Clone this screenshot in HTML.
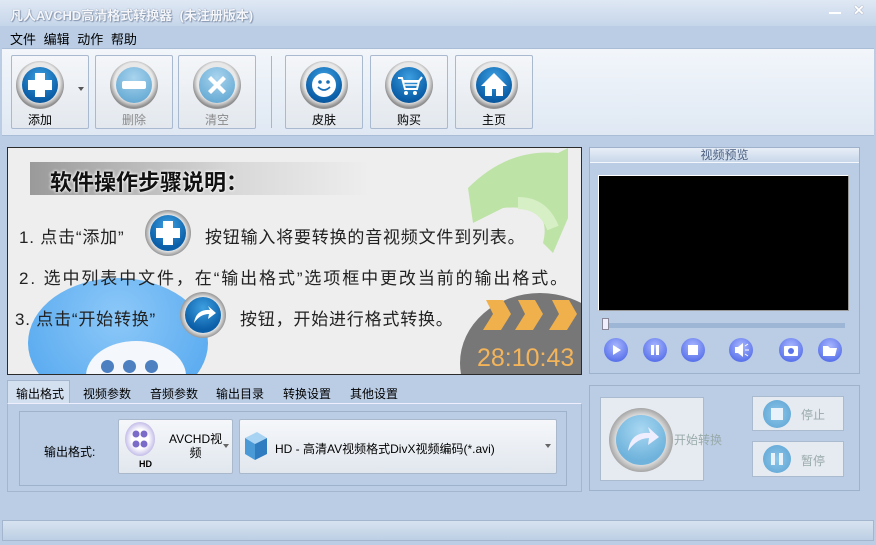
<!DOCTYPE html>
<html><head><meta charset="utf-8"><style>
*{margin:0;padding:0;box-sizing:border-box}
body{width:876px;height:545px;background:#bacde5;font-family:"Liberation Sans","Noto Sans CJK SC",sans-serif;font-size:12px;position:relative;overflow:hidden;color:#000}
.a{position:absolute}
.btn{position:absolute;top:55px;width:78px;height:74px;border:1px solid #a9b9cf;border-radius:2px;background:linear-gradient(#f4f6f9,#e3e8ee);text-align:center}
.btn .ic{position:absolute;left:50%;margin-left:-24px;top:5px;width:48px;height:48px;border-radius:50%;background:radial-gradient(circle at 50% 45%,#e8e8e8 55%,#8d8d8d 70%,#ddd 100%)}
.btn .ic i{position:absolute;left:6px;top:6px;width:36px;height:36px;border-radius:50%;background:radial-gradient(circle at 50% 30%,#3d9fe0,#0b5fa8 70%,#064a87);display:block}
.btn .ic svg{position:absolute;left:6px;top:6px}
.btn span{position:absolute;left:0;right:0;top:55px;font-size:12px}
.dis .ic i{background:radial-gradient(circle at 50% 30%,#a9d4ee,#6fb0d8 70%,#5a9cc8)}
.dis span{color:#8a8a8a}
.pb{position:absolute;width:24px;height:24px;border-radius:50%;background:radial-gradient(circle at 50% 35%,#a9b8ff,#5b73ea 75%,#7a8ef0);top:338px}
.tab{position:absolute;top:385px;font-size:12px}
.t{position:absolute;font-size:17px;letter-spacing:0.8px;color:#222;white-space:nowrap}
</style></head><body>
<div class="a" style="left:0;top:0;width:876px;height:26px;background:linear-gradient(#dfe8f4,#c6d6ea)"></div>
<div class="a" style="left:10px;top:5px;font-size:13px;font-weight:bold;color:#f4f6fa;text-shadow:0 0 1px #6d7f98,1px 1px 1px #8a9ab2">凡人AVCHD高清格式转换器 &nbsp;(未注册版本)</div>
<div class="a" style="left:829px;top:4px;width:12px;height:10px;border-bottom:2px solid #fff"></div>
<div class="a" style="left:853px;top:2px;color:#fff;font-size:14px;font-weight:bold;text-shadow:0 0 1px #667">✕</div>
<div class="a" style="left:10px;top:29px;font-size:13px;word-spacing:4px">文件 编辑 动作 帮助</div>
<div class="a" style="left:2px;top:48px;width:872px;height:88px;background:linear-gradient(#f2f6fb,#dfe8f3);border-top:1px solid #a9bdd6;border-bottom:1px solid #a9bdd6"></div>
<div class="btn" style="left:11px"><div class="ic" style="margin-left:-34px"><i></i><svg width="36" height="36"><path d="M13 6h10v7h7v10h-7v7H13v-7H6V13h7z" fill="#fff"/></svg></div><div class="a" style="left:66px;top:31px;border:3px solid transparent;border-top:4px solid #555"></div><span style="left:-20px">添加</span></div>
<div class="btn dis" style="left:95px"><div class="ic"><i></i><svg width="36" height="36"><rect x="6" y="14" width="24" height="8" rx="2" fill="#fff"/></svg></div><span>删除</span></div>
<div class="btn dis" style="left:178px"><div class="ic"><i></i><svg width="36" height="36"><path d="M9 12l3-3 6 6 6-6 3 3-6 6 6 6-3 3-6-6-6 6-3-3 6-6z" fill="#fff"/></svg></div><span>清空</span></div>
<div class="a" style="left:271px;top:56px;width:1px;height:72px;background:#a8b6c8"></div>
<div class="btn" style="left:285px"><div class="ic"><i></i><svg width="36" height="36"><circle cx="18" cy="18" r="12" fill="#fff"/><circle cx="14" cy="15" r="1.8" fill="#1a70b8"/><circle cx="22" cy="15" r="1.8" fill="#1a70b8"/><path d="M12 20q6 6 12 0" stroke="#1a70b8" stroke-width="1.6" fill="none"/></svg></div><span>皮肤</span></div>
<div class="btn" style="left:370px"><div class="ic"><i></i><svg width="36" height="36"><path d="M7 11h4l3 11h12l2-8H12" stroke="#fff" stroke-width="2" fill="none"/><path d="M13 15h14M14 18h12" stroke="#fff" stroke-width="1.5"/><circle cx="15" cy="26" r="2" fill="#fff"/><circle cx="24" cy="26" r="2" fill="#fff"/><path d="M28 14l3-4" stroke="#fff" stroke-width="2"/></svg></div><span>购买</span></div>
<div class="btn" style="left:455px"><div class="ic"><i></i><svg width="36" height="36"><path d="M18 6L5 19h4v10h7v-7h4v7h7V19h4z" fill="#fff"/></svg></div><span>主页</span></div>
<div class="a" style="left:7px;top:147px;width:575px;height:228px;border:1px solid #2b2b2b;background:#eeeeee;overflow:hidden">
 <div class="a" style="left:22px;top:14px;width:340px;height:33px;background:linear-gradient(90deg,#9a9a9a,#d8d8d8 60%,#eee)"></div>
 <div class="a" style="left:42px;top:17px;font-size:22px;font-weight:bold;color:#111;text-shadow:0 0 3px #fff,0 0 3px #fff">软件操作步骤说明：</div>
 <svg class="a" style="left:410px;top:0" width="165" height="105"><path d="M50 40q40-40 90-35l10-5v70l-15 35-10-10q10-40-40-35l-30 15z" fill="#b5e09a" opacity=".85"/><path d="M100 55q25 0 35 25" stroke="#d6efc4" stroke-width="12" fill="none"/></svg>
 <div class="a" style="left:20px;top:130px;width:180px;height:130px;border-radius:50%;background:radial-gradient(circle at 50% 30%,#8cc8f8,#4ea4ee)"></div>
 <div class="a" style="left:78px;top:193px;width:100px;height:70px;border-radius:50%;background:#f4f7fb"></div>
 <div class="a" style="left:93px;top:212px;width:13px;height:13px;border-radius:50%;background:#4c80c0;box-shadow:22px 0 #4c80c0,44px 0 #4c80c0"></div>
 <div class="a" style="left:452px;top:145px;width:160px;height:140px;border-radius:50%;background:#777"></div>
 <svg class="a" style="left:465px;top:150px" width="110" height="35"><path d="M10 32l10-16-7-14h17l8 14-10 16zM42 32l10-16-7-14h17l8 14-10 16zM76 32l10-16-7-14h17l8 14-10 16z" fill="#f0b04c"/></svg>
 <div class="a" style="left:469px;top:196px;font-size:25px;color:#f4b45a">28:10:43</div>
 <div class="t" style="left:11px;top:75px">1. 点击“添加”</div>
 <div class="a" style="left:137px;top:62px;width:46px;height:46px;border-radius:50%;background:radial-gradient(circle,#e8e8e8 55%,#999 70%,#ddd)"><div class="a" style="left:5px;top:5px;width:36px;height:36px;border-radius:50%;background:radial-gradient(circle at 50% 30%,#3d9fe0,#0b5fa8 70%)"></div><svg class="a" style="left:5px;top:5px" width="36" height="36"><path d="M13 6h10v7h7v10h-7v7H13v-7H6V13h7z" fill="#fff"/></svg></div>
 <div class="t" style="left:197px;top:75px">按钮输入将要转换的音视频文件到列表。</div>
 <div class="t" style="left:11px;top:116px;letter-spacing:1.9px">2. 选中列表中文件，在“输出格式”选项框中更改当前的输出格式。</div>
 <div class="t" style="left:7px;top:157px">3. 点击“开始转换”</div>
 <div class="a" style="left:172px;top:144px;width:46px;height:46px;border-radius:50%;background:radial-gradient(circle,#e8e8e8 55%,#999 70%,#ddd)"><div class="a" style="left:5px;top:5px;width:36px;height:36px;border-radius:50%;background:radial-gradient(circle at 50% 30%,#3d9fe0,#0b5fa8 70%)"></div><svg class="a" style="left:5px;top:5px" width="36" height="36"><path d="M9 26q2-14 16-13l-2-4 8 7-8 6 1-5q-9 0-15 9z" fill="#fff"/></svg></div>
 <div class="t" style="left:232px;top:157px">按钮，开始进行格式转换。</div>
</div>
<div class="a" style="left:589px;top:147px;width:271px;height:227px;border:1px solid #9fb2cb"></div>
<div class="a" style="left:590px;top:148px;width:269px;height:15px;background:linear-gradient(#e8eef7,#c8d7ea);border-bottom:1px solid #f4f7fb;text-align:center;font-size:12px;line-height:15px;color:#4a5f80">视频预览</div>
<div class="a" style="left:598px;top:175px;width:251px;height:136px;background:#000;border:1px solid #fff;border-right-color:#999;border-bottom-color:#999"></div>
<div class="a" style="left:604px;top:323px;width:241px;height:5px;background:#9eb6d5"></div>
<div class="a" style="left:602px;top:318px;width:7px;height:12px;background:#eef;border:1px solid #889"></div>
<div class="pb" style="left:604px"><svg width="24" height="24"><path d="M9 7l8 5-8 5z" fill="#fff"/></svg></div>
<div class="pb" style="left:643px"><svg width="24" height="24"><path d="M8 7h3v10H8zM13 7h3v10h-3z" fill="#fff"/></svg></div>
<div class="pb" style="left:681px"><svg width="24" height="24"><rect x="7" y="7" width="10" height="10" fill="#fff"/></svg></div>
<div class="pb" style="left:729px"><svg width="24" height="24"><path d="M6 9h3l5-4v14l-5-4H6z" fill="#fff"/><path d="M16 8l3-2M16 12h4M16 16l3 2" stroke="#fff"/></svg></div>
<div class="pb" style="left:779px"><svg width="24" height="24"><rect x="5" y="8" width="14" height="10" rx="1" fill="#fff"/><circle cx="12" cy="13" r="3" fill="#5b73ea"/></svg></div>
<div class="pb" style="left:818px"><svg width="24" height="24"><path d="M5 8h5l2 2h7l-2 8H5z" fill="#fff"/></svg></div>
<div class="a" style="left:7px;top:380px;width:63px;height:24px;background:#d3e0f0;border:1px solid #a4b6cd;border-bottom:none"></div>
<div class="tab" style="left:16px">输出格式</div>
<div class="tab" style="left:83px">视频参数</div>
<div class="tab" style="left:150px">音频参数</div>
<div class="tab" style="left:216px">输出目录</div>
<div class="tab" style="left:283px">转换设置</div>
<div class="tab" style="left:350px">其他设置</div>
<div class="a" style="left:7px;top:403px;width:575px;height:89px;border:1px solid #a4b6cd;border-top-color:#eef"></div>
<div class="a" style="left:19px;top:411px;width:548px;height:75px;border:1px solid #9fb2cb"></div>
<div class="a" style="left:44px;top:443px">输出格式:</div>
<div class="a" style="left:118px;top:419px;width:115px;height:55px;border:1px solid #aab8cb;border-radius:2px;background:linear-gradient(#f5f7fa,#e1e7ee)">
 <div class="a" style="left:6px;top:2px;width:30px;height:34px;border-radius:50%;background:radial-gradient(#fff 40%,#8c7fd4)"></div>
 <svg class="a" style="left:9px;top:5px" width="24" height="28"><circle cx="8" cy="9" r="3.5" fill="#7a6cc8"/><circle cx="16" cy="9" r="3.5" fill="#7a6cc8"/><circle cx="8" cy="19" r="3.5" fill="#7a6cc8"/><circle cx="16" cy="19" r="3.5" fill="#7a6cc8"/></svg>
 <div class="a" style="left:20px;top:39px;font-size:9px;font-weight:bold">HD</div>
 <div class="a" style="left:50px;top:12px;font-size:12px;line-height:14px;text-align:center">AVCHD视<br>频</div>
 <div class="a" style="left:104px;top:24px;border:3px solid transparent;border-top:4px solid #666"></div>
</div>
<div class="a" style="left:239px;top:419px;width:318px;height:55px;border:1px solid #aab8cb;border-radius:2px;background:linear-gradient(#f5f7fa,#e1e7ee)">
 <svg class="a" style="left:3px;top:10px" width="26" height="32"><path d="M2 8l12-6 10 6-12 6z" fill="#a9d3f3"/><path d="M2 8l10 6v16L2 24z" fill="#4a9ad8"/><path d="M12 14l12-6v16l-12 6z" fill="#2f7cc0"/></svg>
 <div class="a" style="left:35px;top:20px;font-size:12px">HD - 高清AV视频格式DivX视频编码(*.avi)</div>
 <div class="a" style="left:305px;top:24px;border:3px solid transparent;border-top:4px solid #666"></div>
</div>
<div class="a" style="left:589px;top:385px;width:271px;height:106px;border:1px solid #9fb2cb"></div>
<div class="a" style="left:600px;top:397px;width:104px;height:84px;border:1px solid #aabbd0;background:#e6ebf1">
 <div class="a" style="left:8px;top:10px;width:64px;height:64px;border-radius:50%;background:radial-gradient(circle,#ddd 55%,#a8a8a8 70%,#e4e4e4)"><div class="a" style="left:7px;top:7px;width:50px;height:50px;border-radius:50%;background:radial-gradient(circle at 50% 30%,#a9d8f2,#6fb3dc 70%)"></div><svg class="a" style="left:7px;top:7px" width="50" height="50"><path d="M12 36q3-20 22-18l-2-6 11 10-11 8 1-7q-12 0-21 13z" fill="#eef"/></svg></div>
 <div class="a" style="left:73px;top:33px;color:#9aa;font-size:12px;white-space:nowrap">开始转换</div>
</div>
<div class="a" style="left:752px;top:396px;width:92px;height:35px;border:1px solid #aabbd0;background:#e6ebf1"><div class="a" style="left:10px;top:3px;width:28px;height:28px;border-radius:50%;background:radial-gradient(#8ec6ea,#5aa3d2)"><div class="a" style="left:8px;top:8px;width:12px;height:12px;background:#e8f2fb"></div></div><div class="a" style="left:48px;top:9px;color:#9aa">停止</div></div>
<div class="a" style="left:752px;top:441px;width:92px;height:36px;border:1px solid #aabbd0;background:#e6ebf1"><div class="a" style="left:10px;top:3px;width:28px;height:28px;border-radius:50%;background:radial-gradient(#8ec6ea,#5aa3d2)"><div class="a" style="left:8px;top:8px;width:4px;height:12px;background:#e8f2fb;box-shadow:8px 0 #e8f2fb"></div></div><div class="a" style="left:48px;top:10px;color:#9aa">暂停</div></div>
<div class="a" style="left:2px;top:520px;width:872px;height:21px;border:1px solid #a4b6cd;background:linear-gradient(#d8e3f0,#bccfe4)"></div>
</body></html>
